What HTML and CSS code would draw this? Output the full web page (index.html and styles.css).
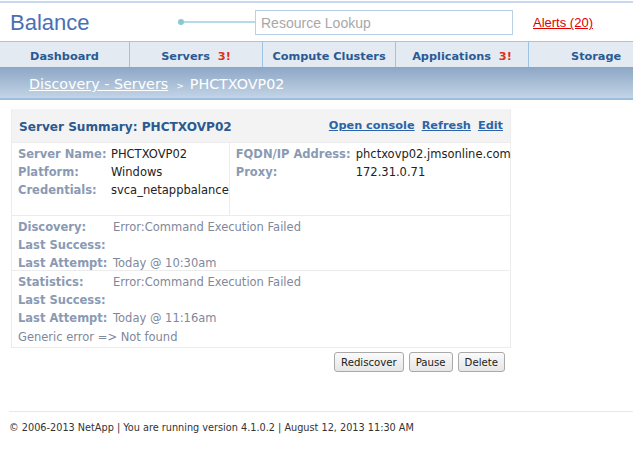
FILE: index.html
```html
<!DOCTYPE html>
<html>
<head>
<meta charset="utf-8">
<link rel="stylesheet" href="styles.css">
</head>
<body>
<div class="topline"></div>
<header class="header">
  <div class="logo">Balance</div>
  <div class="connector"><span class="dot"></span><span class="line"></span></div>
  <div class="search">Resource Lookup</div>
  <a class="alerts" href="#">Alerts (20)</a>
</header>
<nav class="nav">
  <div class="tab">Dashboard</div>
  <div class="tab">Servers <span class="warn">3!</span></div>
  <div class="tab">Compute Clusters</div>
  <div class="tab">Applications <span class="warn">3!</span></div>
  <div class="tab">Storage</div>
</nav>
<div class="crumbs">
  <a href="#" class="crumb-link">Discovery - Servers</a>
  <span class="sep">&gt;</span>
  <span class="crumb-cur">PHCTXOVP02</span>
</div>
<main class="content">
  <section class="panel">
    <div class="panel-head">
      <div class="panel-title">Server Summary: PHCTXOVP02</div>
      <div class="panel-links"><a href="#">Open console</a><a href="#">Refresh</a><a href="#">Edit</a></div>
    </div>
    <div class="info">
      <div class="info-col left">
        <div class="kv"><span class="k">Server Name:</span><span class="v">PHCTXOVP02</span></div>
        <div class="kv"><span class="k">Platform:</span><span class="v">Windows</span></div>
        <div class="kv"><span class="k">Credentials:</span><span class="v">svca_netappbalance</span></div>
      </div>
      <div class="info-col right">
        <div class="kv"><span class="k k2">FQDN/IP Address:</span><span class="v">phctxovp02.jmsonline.com</span></div>
        <div class="kv"><span class="k k2">Proxy:</span><span class="v">172.31.0.71</span></div>
      </div>
    </div>
    <div class="status">
      <div class="kv"><span class="k k3">Discovery:</span><span class="s">Error:Command Execution Failed</span></div>
      <div class="kv"><span class="k k3">Last Success:</span><span class="s"></span></div>
      <div class="kv"><span class="k k3">Last Attempt:</span><span class="s">Today @ 10:30am</span></div>
    </div>
    <div class="status second">
      <div class="kv"><span class="k k3">Statistics:</span><span class="s">Error:Command Execution Failed</span></div>
      <div class="kv"><span class="k k3">Last Success:</span><span class="s"></span></div>
      <div class="kv"><span class="k k3">Last Attempt:</span><span class="s">Today @ 11:16am</span></div>
      <div class="generic">Generic error =&gt; Not found</div>
    </div>
  </section>
  <div class="actions">
    <button class="btn">Rediscover</button>
    <button class="btn">Pause</button>
    <button class="btn">Delete</button>
  </div>
</main>
<footer class="footer">© 2006-2013 NetApp | You are running version 4.1.0.2 | August 12, 2013 11:30 AM</footer>
</body>
</html>
```
FILE: styles.css
```css
* { box-sizing: border-box; }
html, body { margin: 0; padding: 0; background: #fff; }
body { width: 633px; height: 454px; overflow: hidden; font-family: "DejaVu Sans", Verdana, sans-serif; font-size: 11.5px; color: #222; }
a { color: inherit; }

.topline { height: 3px; border-bottom: 2px solid #c6d9ee; }
.header { height: 38px; display: flex; align-items: center; position: relative; }
.logo { font-family: "Liberation Sans", Arial, sans-serif; font-size: 22px; color: #4a6fb5; margin-left: 10px; width: 171px; padding-top: 1px; }
.connector { display: flex; align-items: center; width: 74px; }
.dot { width: 6px; height: 6px; border-radius: 50%; background: #8cc8d2; margin-left: -3px; }
.line { flex: 1; height: 2px; background: #b5dce6; }
.search { width: 258px; height: 25px; border: 1px solid #b9d0e6; font-family: "Liberation Sans", Arial, sans-serif; font-size: 14px; color: #a8a8a8; padding: 4px 0 0 5px; }
.alerts { font-family: "Liberation Sans", Arial, sans-serif; font-size: 13px; color: #e00000; margin-left: 20px; padding-top: 1px; }

.nav { height: 27px; display: flex; background: #e4eaf2; border-top: 1px solid #a3c6e8; border-bottom: 1px solid #7fa8d4; }
.tab { width: 133px; flex: none; border-right: 1px solid #9dc3e6; text-align: center; font-weight: bold; font-size: 11.3px; color: #2a5a92; line-height: 25px; padding-top: 2px; }
.tab:first-child { width: 130px; }
.tab:last-child { border-right: none; flex: 1; padding-left: 42px; text-align: left; }
.warn { color: #d8321c; margin-left: 4px; }

.crumbs { height: 32px; background: linear-gradient(#8ea8c6, #c3d4e6); border-bottom: 2px solid #9ebde0; display: flex; align-items: center; padding: 2px 0 0 29px; font-size: 14.3px; color: #fff; }
.crumb-link { color: #fff; text-decoration: underline; }
.sep { font-size: 9px; margin: 3px 6px 0 8px; }
.crumb-cur { color: #fff; }

.content { padding: 9px 0 0 11px; width: 511px; }
.panel { width: 500px; border: 1px solid #ececec; border-top: none; }
.panel-head { height: 33px; background: #f3f3f3; display: flex; align-items: center; justify-content: space-between; padding: 3px 7px 0 7px; }
.panel-title { font-weight: bold; font-size: 12.1px; color: #2b5a8e; }
.panel-links { display: flex; gap: 7px; font-weight: bold; font-size: 11.3px; color: #2b64a8; margin-bottom: 4px; }
.panel-links a { color: #2b64a8; }

.info { display: flex; border-top: 1px solid #ececec; height: 73px; }
.info-col { padding: 2px 0 0 6px; }
.info-col.left { width: 218px; border-right: 1px solid #ececec; }
.info-col.right { flex: 1; }
.kv { display: flex; height: 18px; line-height: 18px; white-space: nowrap; }
.k { font-weight: bold; color: #8a9ab3; width: 93px; flex: none; }
.k2 { width: 120px; }
.k3 { width: 95px; }
.v { color: #222; }
.s { color: #80889b; }

.status { border-top: 1px solid #ececec; padding: 2px 0 0 6px; height: 55px; }
.status.second { height: 77px; }
.generic { color: #80889b; line-height: 20px; height: 20px; }

.actions { display: flex; justify-content: flex-end; gap: 5px; padding: 4px 6px 0 0; }
.btn { height: 20px; padding: 0 6px; font-family: "DejaVu Sans Condensed", Tahoma, sans-serif; font-size: 11.3px; color: #222; background: linear-gradient(#fafafa, #e6e6e6); border: 1px solid #a9a9a9; border-radius: 3px; }

.footer { margin: 39px 0 0 9px; border-top: 1px solid #e8e8e8; padding-top: 9px; font-family: "DejaVu Sans Condensed", Tahoma, sans-serif; font-size: 10.8px; color: #333; }
```
